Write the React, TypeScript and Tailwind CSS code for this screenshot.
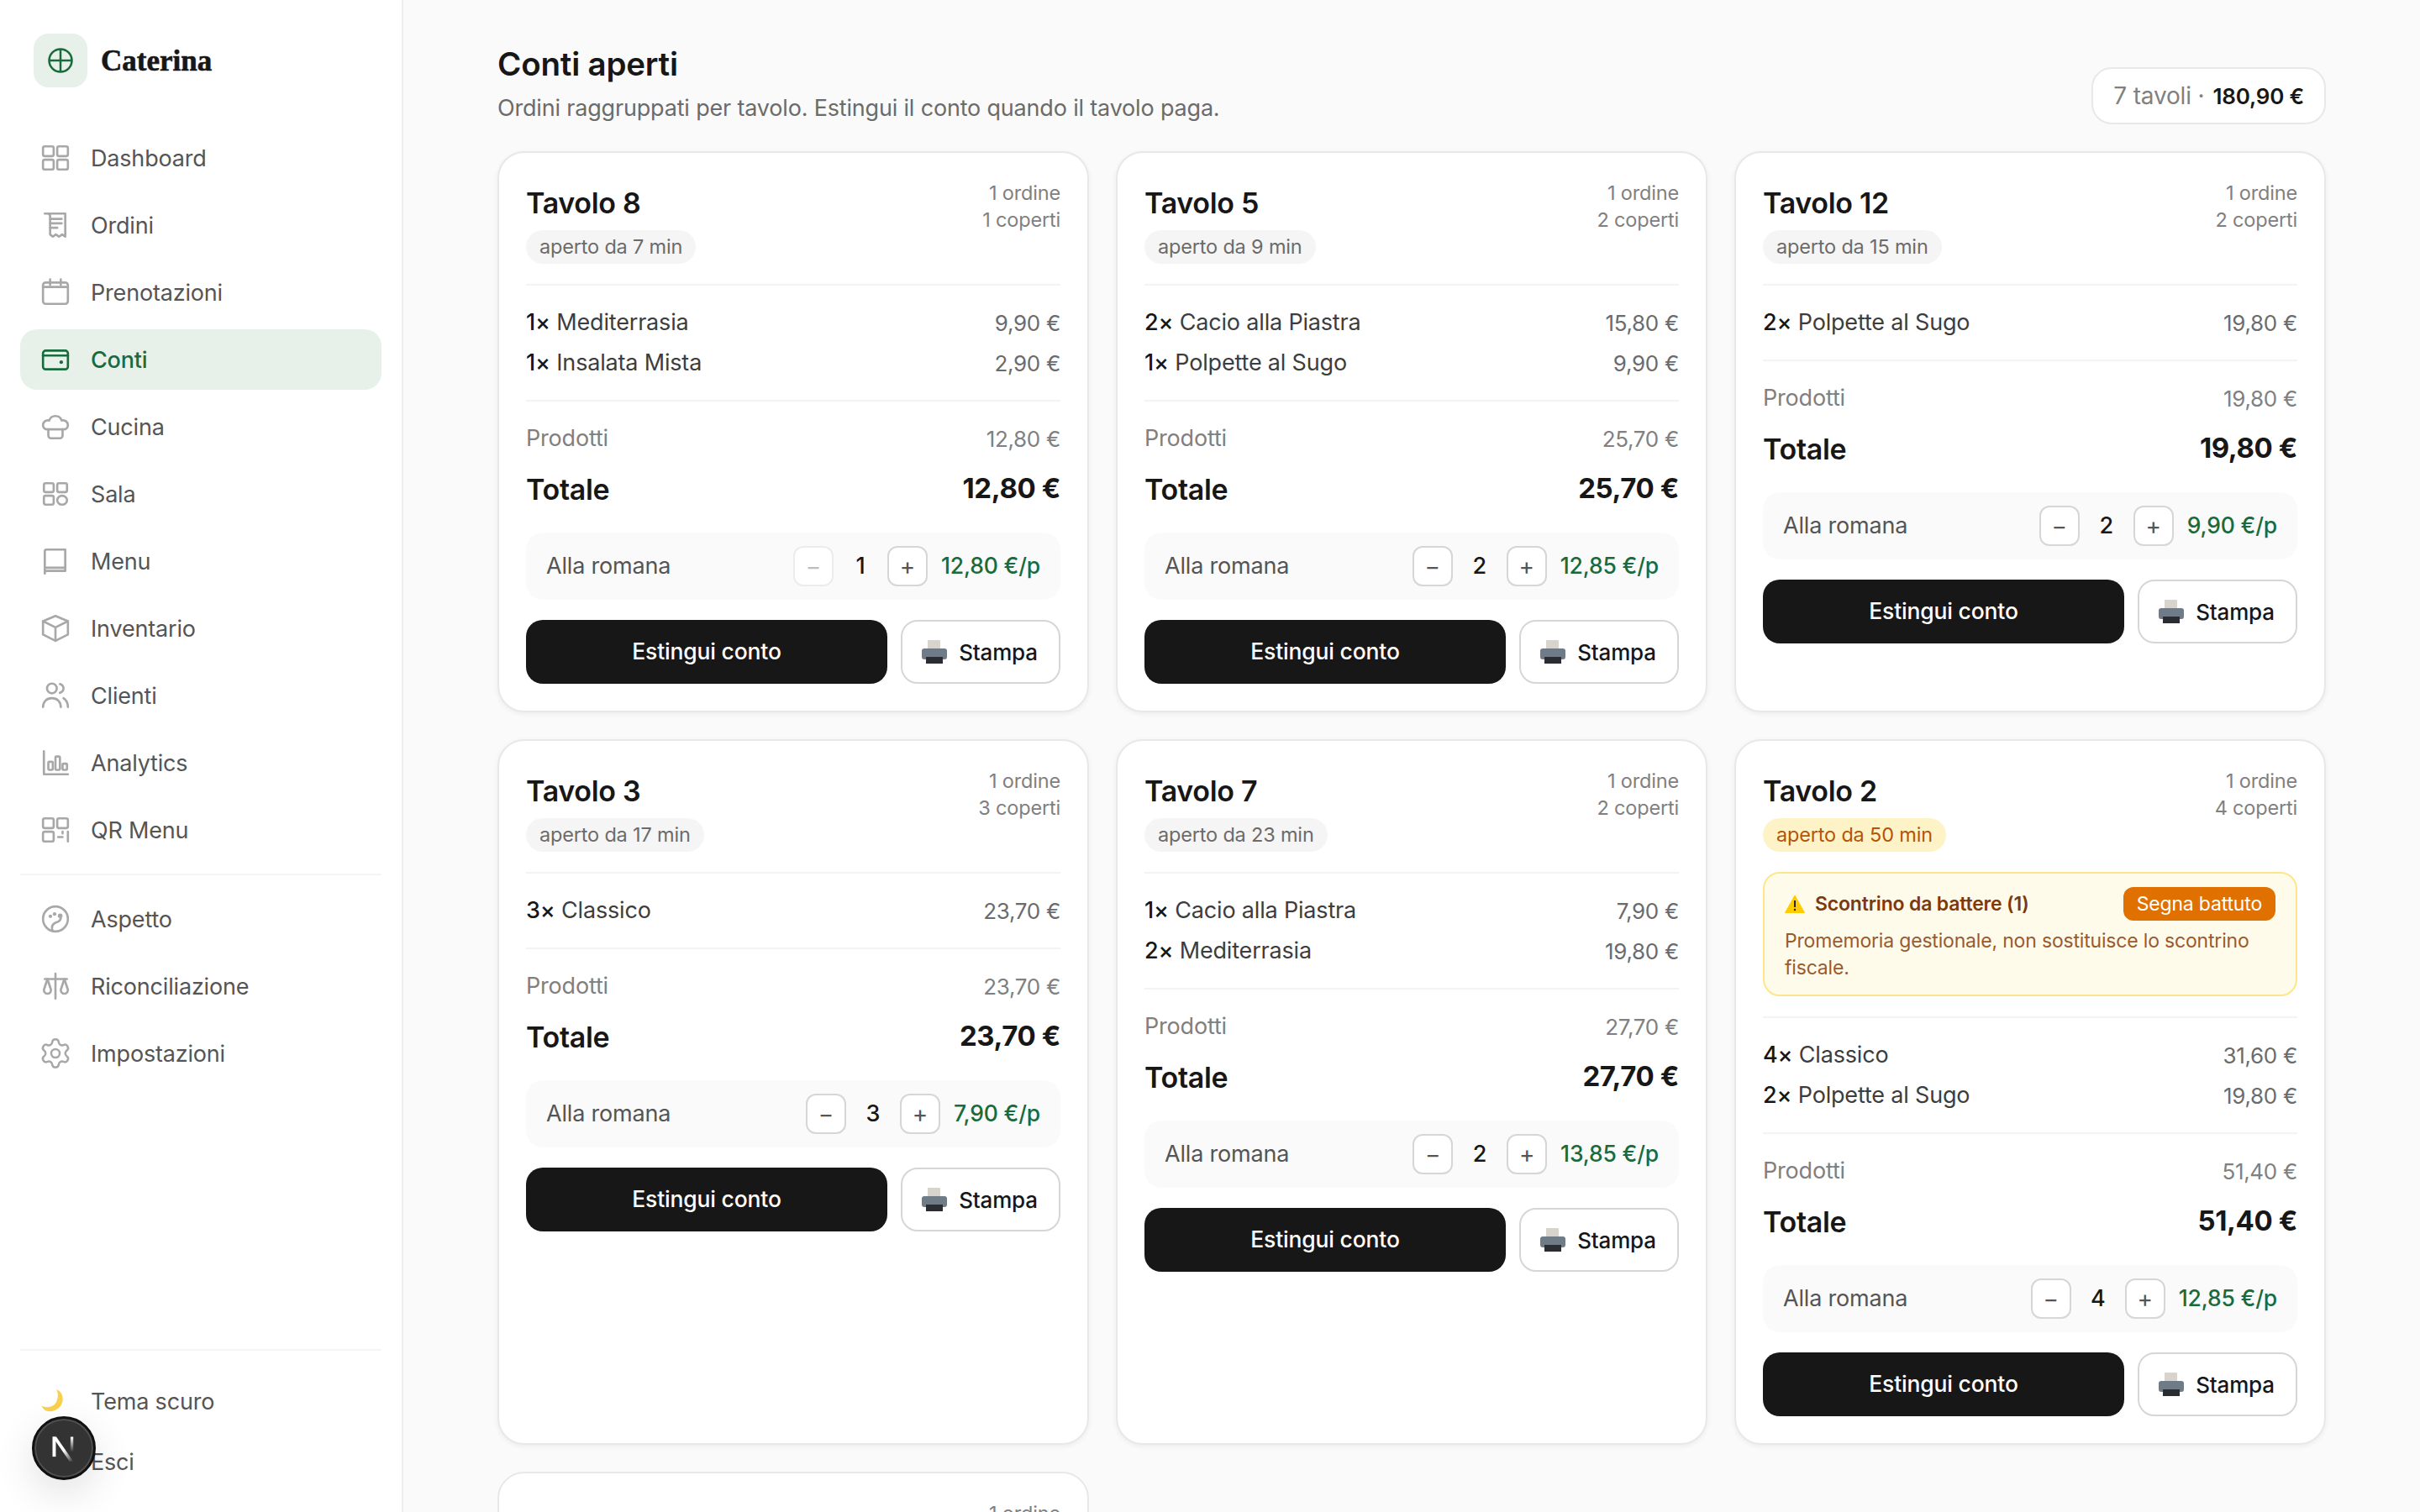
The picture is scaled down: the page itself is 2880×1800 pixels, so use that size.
import type { ReactNode } from 'react'
import { Settings } from 'lucide-react'

function Ico({ children, active }: { children: ReactNode; active?: boolean }) {
  return (
    <svg
      viewBox="-1 -1 34 34"
      className={`w-9 h-9 shrink-0 ${active ? 'text-[#1a6b3c]' : 'text-[#a8a8a8]'}`}
      fill="none"
      stroke="currentColor"
      strokeWidth="2.5"
      strokeLinecap="round"
      strokeLinejoin="round"
    >
      {children}
    </svg>
  )
}

const grid = (
  <>
    <rect x="2" y="3" width="12" height="11" rx="2" />
    <rect x="18" y="3" width="12" height="11" rx="2" />
    <rect x="2" y="18" width="12" height="11" rx="2" />
    <rect x="18" y="18" width="12" height="11" rx="2" />
  </>
)

const navTop = [
  { label: 'Dashboard', icon: grid },
  {
    label: 'Ordini',
    icon: (
      <>
        <path d="M4 3h23v26l-3.500-2.500-3.500 2.500-3.500-2.500-3.500 2.500-3-2.500V6c0-2-1-3-3-3z" />
        <path d="M10 9h13M10 14h13M10 19h8" />
      </>
    ),
  },
  {
    label: 'Prenotazioni',
    icon: (
      <>
        <rect x="2" y="5" width="28" height="24" rx="3" />
        <path d="M2 10h28M10 1.500v6M22 1.500v6" />
      </>
    ),
  },
  {
    label: 'Conti',
    active: true,
    icon: (
      <>
        <rect x="2" y="6" width="28" height="21" rx="3" />
        <path d="M2 11.500h28" />
        <circle cx="22.500" cy="19" r="2" fill="currentColor" stroke="none" />
      </>
    ),
  },
  {
    label: 'Cucina',
    icon: (
      <>
        <path d="M7 19c-3 0-5-2-5-5 0-3 3-6 7-5 1-3 4-5 7-5s6 2 7 5c4-1 7 2 7 5 0 3-2 5-5 5H7z" />
        <path d="M8 19v7a3 3 0 0 0 3 3h10a3 3 0 0 0 3-3v-7" />
      </>
    ),
  },
  {
    label: 'Sala',
    icon: (
      <>
        <rect x="3" y="4" width="11" height="10" rx="2" />
        <rect x="18" y="4" width="11" height="10" rx="2" />
        <rect x="3" y="18" width="11" height="10" rx="2" />
        <ellipse cx="23.500" cy="23" rx="5.500" ry="5" />
      </>
    ),
  },
  {
    label: 'Menu',
    icon: (
      <>
        <path d="M4 30V5a2 2 0 0 1 2-2h21v24H6a2 2 0 0 0-2 2" />
        <path d="M5 23.500h22" />
      </>
    ),
  },
  {
    label: 'Inventario',
    icon: (
      <>
        <path d="M16 2l14 6v15l-14 7-14-7V8z" />
        <path d="M2 8l14 7 14-7M16 15v15" />
      </>
    ),
  },
  {
    label: 'Clienti',
    icon: (
      <>
        <circle cx="12" cy="8" r="5.500" />
        <path d="M2 29c0-6 4-10 10-10s10 4 10 10M21 3c3 1 4 3 4 5s-1 4-4 5M25 19c3 2 5 5 5 10" />
      </>
    ),
  },
  {
    label: 'Analytics',
    icon: (
      <>
        <path d="M3 3v26h27" />
        <rect x="8" y="15" width="5" height="9" rx="1" />
        <rect x="16" y="9" width="5" height="15" rx="1" />
        <rect x="24" y="17" width="5" height="7" rx="1" />
      </>
    ),
  },
  {
    label: 'QR Menu',
    icon: (
      <>
        <rect x="2" y="3" width="12" height="11" rx="2" />
        <rect x="18" y="3" width="12" height="11" rx="2" />
        <rect x="2" y="18" width="12" height="11" rx="2" />
        <path d="M19 24h5M24 18v2M30 18v11" />
      </>
    ),
  },
]

const navBottom = [
  {
    label: 'Aspetto',
    icon: (
      <>
        <circle cx="16" cy="16" r="14" />
        <path d="M12.500 29c-1-4 0-7 3-8.500s6-1 6.500-5.500" />
        <circle cx="10.300" cy="13" r="2" fill="currentColor" stroke="none" />
        <circle cx="15" cy="10.500" r="2" fill="currentColor" stroke="none" />
        <circle cx="21.300" cy="12.500" r="2.600" fill="currentColor" stroke="none" />
      </>
    ),
  },
  {
    label: 'Riconciliazione',
    icon: (
      <>
        <path d="M16 2v28M4 8h25" />
        <path d="M7 8l-4 12c0 3 2 4.500 4 4.500s4-1.500 4-4.500L7 8zM26 8l-4 12c0 3 2 4.500 4 4.500s4-1.500 4-4.500L26 8z" />
      </>
    ),
  },
  {
    label: 'Impostazioni',
    icon: <Settings x={-3} y={-3} width={38} height={38} strokeWidth={1.5} />,
  },
]

function NavItem({ label, icon, active }: { label: string; icon: ReactNode; active?: boolean }) {
  return (
    <div
      className={`h-[72px] flex items-center gap-6 pl-6 rounded-[20px] text-[27px] ${
        active ? 'bg-[#e8f0ea] text-[#1a6b3c] font-medium' : 'text-[#555555]'
      }`}
    >
      <Ico active={active}>{icon}</Ico>
      <span className="pt-[2px]">{label}</span>
    </div>
  )
}

function Moon() {
  return (
    <svg viewBox="0 0 36 36" className="w-9 h-9 shrink-0">
      <path
        d="M19 4C25 6 27.500 12 26.500 18C25 27 14 33 6 29C4 28 2.500 26 1.500 23.500C8 27 16 25 19 19C21.500 14 21.500 8 19 4Z"
        fill="#f8d24e"
      />
    </svg>
  )
}

function Printer() {
  return (
    <svg viewBox="0 0 30 28" className="w-[30px] h-7 shrink-0">
      <rect x="7" y="0" width="15" height="11" rx="1" fill="#d8d4cc" />
      <rect x="0" y="10" width="30" height="13" rx="3" fill="#6f7c88" />
      <rect x="5" y="20" width="20" height="8" fill="#2a2e33" />
    </svg>
  )
}

function Warn() {
  return (
    <svg viewBox="0 0 24 22" className="w-6 h-[22px] shrink-0">
      <path d="M12 1L23.500 21.500H.5z" fill="#ffcc00" stroke="#ffcc00" strokeLinejoin="round" />
      <path d="M12 7v8" stroke="#222222" strokeWidth="2" />
      <circle cx="12" cy="18" r="1.200" fill="#222222" />
    </svg>
  )
}

type Item = { qty: number; name: string; price: string }
type Conto = {
  table: string
  ordini: string
  coperti: string
  open: string
  items: Item[]
  total: string
  split: number
  perPerson: string
  late?: boolean
  alert?: boolean
}

const conti: Conto[] = [
  {
    table: 'Tavolo 8',
    ordini: '1 ordine',
    coperti: '1 coperti',
    open: 'aperto da 7 min',
    items: [
      { qty: 1, name: 'Mediterrasia', price: '9,90 €' },
      { qty: 1, name: 'Insalata Mista', price: '2,90 €' },
    ],
    total: '12,80 €',
    split: 1,
    perPerson: '12,80 €/p',
  },
  {
    table: 'Tavolo 5',
    ordini: '1 ordine',
    coperti: '2 coperti',
    open: 'aperto da 9 min',
    items: [
      { qty: 2, name: 'Cacio alla Piastra', price: '15,80 €' },
      { qty: 1, name: 'Polpette al Sugo', price: '9,90 €' },
    ],
    total: '25,70 €',
    split: 2,
    perPerson: '12,85 €/p',
  },
  {
    table: 'Tavolo 12',
    ordini: '1 ordine',
    coperti: '2 coperti',
    open: 'aperto da 15 min',
    items: [{ qty: 2, name: 'Polpette al Sugo', price: '19,80 €' }],
    total: '19,80 €',
    split: 2,
    perPerson: '9,90 €/p',
  },
  {
    table: 'Tavolo 3',
    ordini: '1 ordine',
    coperti: '3 coperti',
    open: 'aperto da 17 min',
    items: [{ qty: 3, name: 'Classico', price: '23,70 €' }],
    total: '23,70 €',
    split: 3,
    perPerson: '7,90 €/p',
  },
  {
    table: 'Tavolo 7',
    ordini: '1 ordine',
    coperti: '2 coperti',
    open: 'aperto da 23 min',
    items: [
      { qty: 1, name: 'Cacio alla Piastra', price: '7,90 €' },
      { qty: 2, name: 'Mediterrasia', price: '19,80 €' },
    ],
    total: '27,70 €',
    split: 2,
    perPerson: '13,85 €/p',
  },
  {
    table: 'Tavolo 2',
    ordini: '1 ordine',
    coperti: '4 coperti',
    open: 'aperto da 50 min',
    late: true,
    alert: true,
    items: [
      { qty: 4, name: 'Classico', price: '31,60 €' },
      { qty: 2, name: 'Polpette al Sugo', price: '19,80 €' },
    ],
    total: '51,40 €',
    split: 4,
    perPerson: '12,85 €/p',
  },
]

function Card({ c }: { c: Conto }) {
  return (
    <div className="bg-white border-2 border-[#e8e8e8] rounded-[32px] p-8 shadow-[0_2px_6px_rgba(0,0,0,0.06)]">
      <div className="flex justify-between">
        <div>
          <div className="h-14 leading-[56px] text-[34px] font-semibold tracking-[-0.3px] text-[#171717]">{c.table}</div>
          <span
            className={`mt-1 inline-flex h-10 items-center px-4 rounded-full text-[23.5px] ${
              c.late ? 'bg-[#fef3c7] text-[#b45309]' : 'bg-[#f5f5f5] text-[#6b6b6b]'
            }`}
          >
            {c.open}
          </span>
        </div>
        <div className="text-right text-[23.5px] leading-8 text-[#808080]">
          <div>{c.ordini}</div>
          <div>{c.coperti}</div>
        </div>
      </div>

      {c.alert && (
        <div className="mt-6 border-2 border-[#fde68a] bg-[#fffbeb] rounded-[20px] pt-4 pb-4 px-6">
          <div className="flex items-center justify-between h-10">
            <div className="flex items-center gap-3 text-[23px] font-semibold text-[#7c3a0c]">
              <Warn />
              Scontrino da battere (1)
            </div>
            <span className="h-10 flex items-center px-4 rounded-xl bg-[#e07000] text-white text-[23px]">
              Segna battuto
            </span>
          </div>
          <p className="mt-2 text-[23px] leading-8 text-[#9a5a2e]">
            Promemoria gestionale, non sostituisce lo scontrino fiscale.
          </p>
        </div>
      )}

      <div className="mt-6 border-t-2 border-[#f3f3f3] py-5">
        {c.items.map((it) => (
          <div key={it.name} className="h-12 flex items-center justify-between text-[27px]">
            <span className="text-[#3d3d3d] pt-px">
              <span className="font-medium text-[#171717]">{it.qty}×</span> {it.name}
            </span>
            <span className="text-[26px] tracking-[-0.3px] text-[#6b6b6b]">{it.price}</span>
          </div>
        ))}
      </div>

      <div className="border-t-2 border-[#f3f3f3] pt-5">
        <div className="h-12 flex items-center justify-between text-[27px] text-[#808080]">
          <span className="pt-px">Prodotti</span>
          <span className="text-[26px] tracking-[-0.3px]">{c.total}</span>
        </div>
        <div className="h-[72px] flex items-center justify-between font-bold text-[#171717]">
          <span className="text-[34px] font-semibold tracking-[-0.3px]">Totale</span>
          <span className="text-[33px] tracking-[-0.4px]">{c.total}</span>
        </div>
      </div>

      <div className="mt-4 h-20 px-6 flex items-center justify-between rounded-[20px] bg-[#fafafa]">
        <span className="text-[27px] text-[#555555] pt-px">Alla romana</span>
        <div className="flex items-center gap-[16px]">
          <div className="flex items-center">
            <span
              className={`w-12 h-12 flex items-center justify-center rounded-xl border-2 bg-white text-[28px] ${
                c.split === 1 ? 'border-[#ececec] text-[#bdbdbd]' : 'border-[#d6d6d6] text-[#555555]'
              }`}
            >
              −
            </span>
            <span className="w-[64px] text-center text-[27px] font-medium text-[#171717]">{c.split}</span>
            <span className="w-12 h-12 flex items-center justify-center rounded-xl border-2 border-[#d6d6d6] bg-white text-[28px] text-[#555555]">
              +
            </span>
          </div>
          <span className="text-[26.5px] font-medium text-[#1a6b3c]">{c.perPerson}</span>
        </div>
      </div>

      <div className="mt-6 flex gap-4">
        <div className="flex-1 h-[76px] flex items-center justify-center rounded-[20px] bg-[#171717] text-white text-[26.5px] font-medium">
          Estingui conto
        </div>
        <div className="w-[190px] h-[76px] flex items-center justify-center gap-[14px] pr-[2px] rounded-[20px] border-2 border-[#d6d6d6] bg-white text-[#171717] text-[26px] font-medium">
          <Printer />
          Stampa
        </div>
      </div>
    </div>
  )
}

export default function App() {
  return (
    <div className="h-screen flex overflow-hidden bg-[#fafafa] tracking-[-0.18px] [font-family:Inter,sans-serif]">
      <aside className="w-[480px] shrink-0 bg-white border-r-2 border-[#eeeeee] px-6 pt-10 pb-6 flex flex-col">
        <div className="flex items-center gap-4 pl-4 h-16 mb-12">
          <div className="w-16 h-16 rounded-[18px] bg-[#e8f0ea] flex items-center justify-center">
            <svg viewBox="0 0 32 32" className="w-8 h-8 text-[#1a6b3c]" fill="none" stroke="currentColor" strokeWidth="2.500">
              <circle cx="16" cy="16" r="13.500" />
              <path d="M16 2.500v27M2.500 16h27" />
            </svg>
          </div>
          <span className="pt-[2px] text-[35px] font-bold tracking-normal text-[#171717] [font-family:'Liberation_Serif',serif] [-webkit-text-stroke:0.6px_#171717]">
            Caterina
          </span>
        </div>

        <nav className="flex flex-col gap-2">
          {navTop.map((n) => (
            <NavItem key={n.label} {...n} />
          ))}
        </nav>
        <div className="my-4 border-t-2 border-[#f5f5f5]" />
        <nav className="flex flex-col gap-2">
          {navBottom.map((n) => (
            <NavItem key={n.label} {...n} />
          ))}
        </nav>

        <div className="mt-auto border-t-2 border-[#f5f5f5] pt-6">
          <div className="h-[72px] flex items-center gap-6 pl-6 text-[27px] text-[#555555]">
            <Moon />
            <span className="pt-[2px]">Tema scuro</span>
          </div>
          <div className="h-[72px] flex items-center gap-6 pl-6 text-[27px] text-[#555555]">
            <span className="w-9" />
            <span className="pt-[2px]">Esci</span>
          </div>
        </div>
      </aside>

      <main className="flex-1 overflow-hidden px-[112px] pt-12">
        <div className="flex items-end justify-between mb-8">
          <div>
            <h1 className="h-14 leading-[56px] text-[38.5px] font-semibold tracking-[-0.2px] text-[#171717]">Conti aperti</h1>
            <p className="mt-1 h-10 leading-10 text-[27px] text-[#6b6b6b] pt-px">
              Ordini raggruppati per tavolo. Estingui il conto quando il tavolo paga.
            </p>
          </div>
          <div className="h-[68px] flex items-center gap-[10px] px-6 rounded-3xl border-2 border-[#e8e8e8] bg-white text-[28px] text-[#808080]">
            7 tavoli · <span className="font-semibold text-[26px] text-[#171717]">180,90 €</span>
          </div>
        </div>
        <div className="grid grid-cols-3 gap-8">
          {conti.map((c) => (
            <Card key={c.table} c={c} />
          ))}
          <div className="bg-white border-2 border-[#e8e8e8] rounded-[32px] p-8 text-right text-[23.5px] leading-8 text-[#808080]">
            1 ordine
          </div>
        </div>
      </main>

      {/* dev indicator that floats over the sidebar */}
      <div className="fixed left-[38px] bottom-[38px] w-[76px] h-[76px] rounded-full bg-[#333333] border-[3px] border-[#111111] flex items-center justify-center shadow-[0_16px_48px_rgba(0,0,0,0.12),inset_0_0_0_2px_rgba(255,255,255,0.14)]">
        <svg viewBox="0 0 32 32" className="w-9 h-9">
          <defs>
            <linearGradient id="nfade" x1="0" y1="0" x2="1" y2="1">
              <stop offset="0.55" stopColor="#fff" />
              <stop offset="1" stopColor="#fff" stopOpacity="0" />
            </linearGradient>
            <linearGradient id="nbar" x1="0" y1="0" x2="0" y2="1">
              <stop offset="0" stopColor="#fff" />
              <stop offset="0.8" stopColor="#fff" stopOpacity="0" />
            </linearGradient>
          </defs>
          <path d="M4 4h3.500v21H4z" fill="#fff" />
          <path d="M4 4h4l18 26h-4z" fill="url(#nfade)" />
          <path d="M23 4h3v20h-3z" fill="url(#nbar)" />
        </svg>
      </div>
    </div>
  )
}
